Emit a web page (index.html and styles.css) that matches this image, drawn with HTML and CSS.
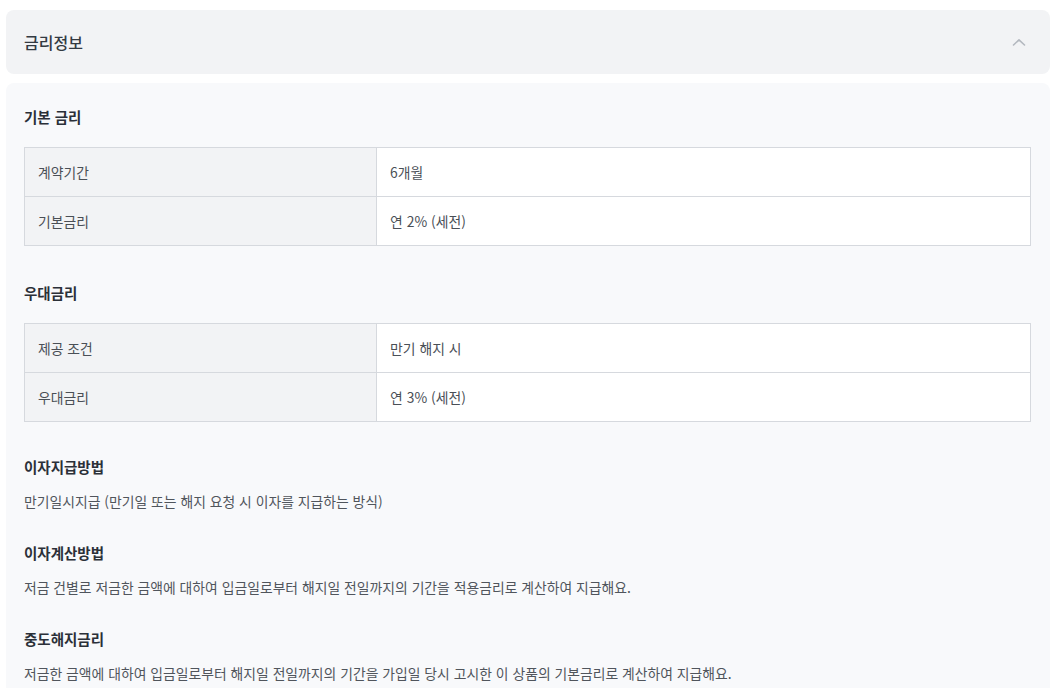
FILE: index.html
```html
<!DOCTYPE html>
<html lang="ko">
<head>
<meta charset="utf-8">
<link rel="stylesheet" href="styles.css">
</head>
<body>
<div class="page">
  <div class="acc-head">
    <span class="acc-title">금리정보</span>
    <svg class="chev" width="14" height="8" viewBox="0 0 14 8"><path d="M1.5 7 L7 1.8 L12.5 7" fill="none" stroke="#b3b8bf" stroke-width="1.6" stroke-linecap="round" stroke-linejoin="round"/></svg>
  </div>
  <div class="acc-body">
    <h3 class="sec-title">기본 금리</h3>
    <table class="info">
      <tr><th>계약기간</th><td>6개월</td></tr>
      <tr><th>기본금리</th><td>연 2% (세전)</td></tr>
    </table>
    <h3 class="sec-title">우대금리</h3>
    <table class="info">
      <tr><th>제공 조건</th><td>만기 해지 시</td></tr>
      <tr><th>우대금리</th><td>연 3% (세전)</td></tr>
    </table>
    <h3 class="sec-title last-table">이자지급방법</h3>
    <p class="desc">만기일시지급 (만기일 또는 해지 요청 시 이자를 지급하는 방식)</p>
    <h3 class="sec-title">이자계산방법</h3>
    <p class="desc">저금 건별로 저금한 금액에 대하여 입금일로부터 해지일 전일까지의 기간을 적용금리로 계산하여 지급해요.</p>
    <h3 class="sec-title">중도해지금리</h3>
    <p class="desc">저금한 금액에 대하여 입금일로부터 해지일 전일까지의 기간을 가입일 당시 고시한 이 상품의 기본금리로 계산하여 지급해요.</p>
  </div>
</div>
</body>
</html>
```
FILE: styles.css
```css
html, body {
  margin: 0;
  padding: 0;
  background: #ffffff;
  font-family: "Noto Sans CJK KR", "Noto Sans", sans-serif;
}
.page {
  padding: 10px 1px 0 6px;
}
.acc-head {
  height: 64px;
  background: #f2f3f5;
  border-radius: 8px;
  display: flex;
  align-items: center;
  justify-content: space-between;
  padding: 0 24px 0 18px;
}
.acc-title {
  font-size: 16px;
  color: #333a42;
  font-weight: 500;
}
.chev {
  display: block;
}
.acc-body {
  margin-top: 9px;
  background: #f8f9fb;
  border-radius: 8px 8px 0 0;
  padding: 24px 19px 40px 18px;
}
.sec-title {
  margin: 0;
  font-size: 14.5px;
  line-height: 20px;
  font-weight: 700;
  color: #2b3038;
}
.info + .sec-title {
  margin-top: 37px;
}
.info + .sec-title.last-table {
  margin-top: 35px;
}
.desc + .sec-title {
  margin-top: 32px;
}
.info {
  width: 100%;
  border-collapse: collapse;
  margin-top: 20px;
  font-size: 13.85px;
  color: #4a4f56;
}
.info th, .info td {
  border: 1px solid #d6d9de;
  height: 48px;
  padding: 0 13px;
  text-align: left;
  font-weight: 400;
}
.info th {
  width: 35%;
  background: #f2f3f5;
}
.info td {
  background: #ffffff;
}
.desc {
  margin: 14px 0 0;
  font-size: 13.85px;
  line-height: 20px;
  color: #50555c;
}
```
